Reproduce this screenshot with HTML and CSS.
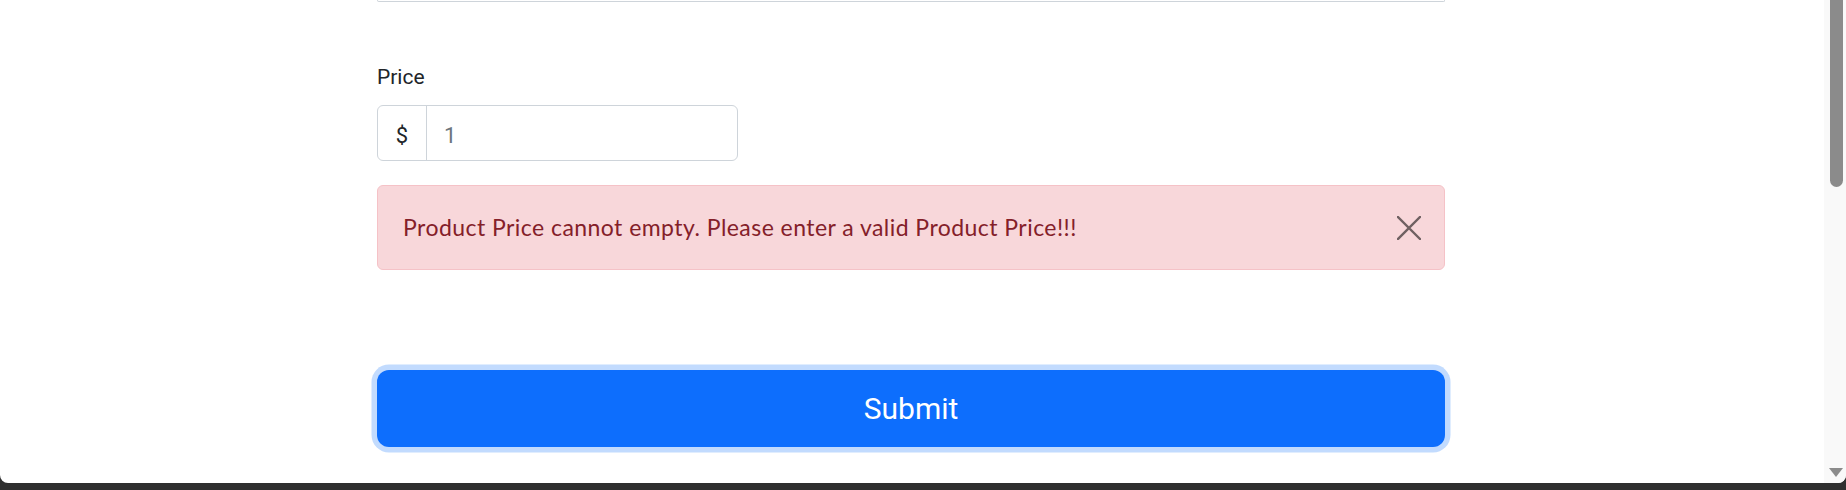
FILE: index.html
```html
<!DOCTYPE html>
<html lang="en">
<head>
<meta charset="utf-8">
<title>Product form</title>
<link rel="stylesheet" href="styles.css">
</head>
<body>
<div class="window">
  <main class="main">
    <form class="form">
      <div class="prev-field"></div>
      <label class="label" for="price">Price</label>
      <div class="input-group">
        <span class="addon">$</span>
        <input class="control" id="price" type="text" placeholder="1">
      </div>
      <div class="alert" role="alert">
        <span class="alert-text">Product Price cannot empty. Please enter a valid Product Price!!!</span>
        <button class="close" type="button" aria-label="Close">
          <svg width="24" height="24" viewBox="0 0 24 24"><path d="M1 1L23 23M23 1L1 23" stroke="#000" stroke-width="2.4" stroke-linecap="square" fill="none"/></svg>
        </button>
      </div>
      <button class="submit" type="button">Submit</button>
    </form>
  </main>
  <div class="scrollbar">
    <div class="thumb"></div>
    <div class="arrow"></div>
  </div>
</div>
</body>
</html>
```

FILE: styles.css
```css
html, body {
  margin: 0;
  height: 100%;
}
body {
  background: #2f2f2f;
  font-family: Roboto, "Liberation Sans", sans-serif;
  color: #212529;
}
.window {
  height: 483px;
  background: #fff;
  display: flex;
  border-radius: 0 0 8px 8px;
  overflow: hidden;
}
.main {
  flex: 1;
}
.form {
  width: 1068px;
  margin-left: 377px;
  display: flex;
  flex-direction: column;
}
.prev-field {
  height: 1px;
  border: 1px solid #ced4da;
  border-top: 0;
  border-radius: 0 0 6px 6px;
}
.label {
  margin-top: 60px;
  font-size: 21px;
  line-height: 31px;
  color: #212529;
}
.input-group {
  margin-top: 12px;
  width: 361px;
  height: 56px;
  display: flex;
  box-sizing: border-box;
  border: 1px solid #ced4da;
  border-radius: 6px;
  overflow: hidden;
}
.addon {
  width: 49px;
  border-right: 1px solid #ced4da;
  display: flex;
  align-items: center;
  justify-content: center;
  padding-top: 4px;
  box-sizing: border-box;
  font-size: 22px;
  color: #212529;
}
.control {
  flex: 1;
  min-width: 0;
  border: 0;
  outline: none;
  margin: 0;
  padding: 4px 17px 0;
  font-family: Roboto, "Liberation Sans", sans-serif;
  font-size: 22px;
  color: #6c757d;
  background: transparent;
}
.control::placeholder {
  color: #6c757d;
  opacity: 1;
}
.alert {
  margin-top: 24px;
  height: 85px;
  box-sizing: border-box;
  background: #f8d7da;
  border: 1px solid #f5c2c7;
  border-radius: 6px;
  color: #842029;
  display: flex;
  align-items: center;
  justify-content: space-between;
  padding: 0 23px 0 25px;
  font-family: Lato, "Open Sans", sans-serif;
  font-size: 23px;
  letter-spacing: 0.45px;
  line-height: 33px;
}
.close {
  width: 24px;
  height: 24px;
  padding: 0;
  border: 0;
  background: transparent;
  opacity: .55;
  display: flex;
  cursor: pointer;
}
.submit {
  margin-top: 100px;
  height: 77px;
  border: 0;
  border-radius: 12px;
  background: #0d6efd;
  color: #fff;
  font-family: Roboto, "Liberation Sans", sans-serif;
  font-size: 30px;
  box-shadow: 0 0 0 5.5px #c2dbfe;
  cursor: pointer;
}
.scrollbar {
  width: 22px;
  background: #f9f9f9;
  display: flex;
  flex-direction: column;
  justify-content: space-between;
  align-items: center;
}
.thumb {
  width: 13px;
  height: 187px;
  margin-left: 2px;
  background: #8b8b8b;
  border-radius: 0 0 7px 7px;
}
.arrow {
  width: 0;
  height: 0;
  margin: 0 0 6px 2px;
  border-left: 7.5px solid transparent;
  border-right: 7.5px solid transparent;
  border-top: 9px solid #8b8b8b;
}
```
